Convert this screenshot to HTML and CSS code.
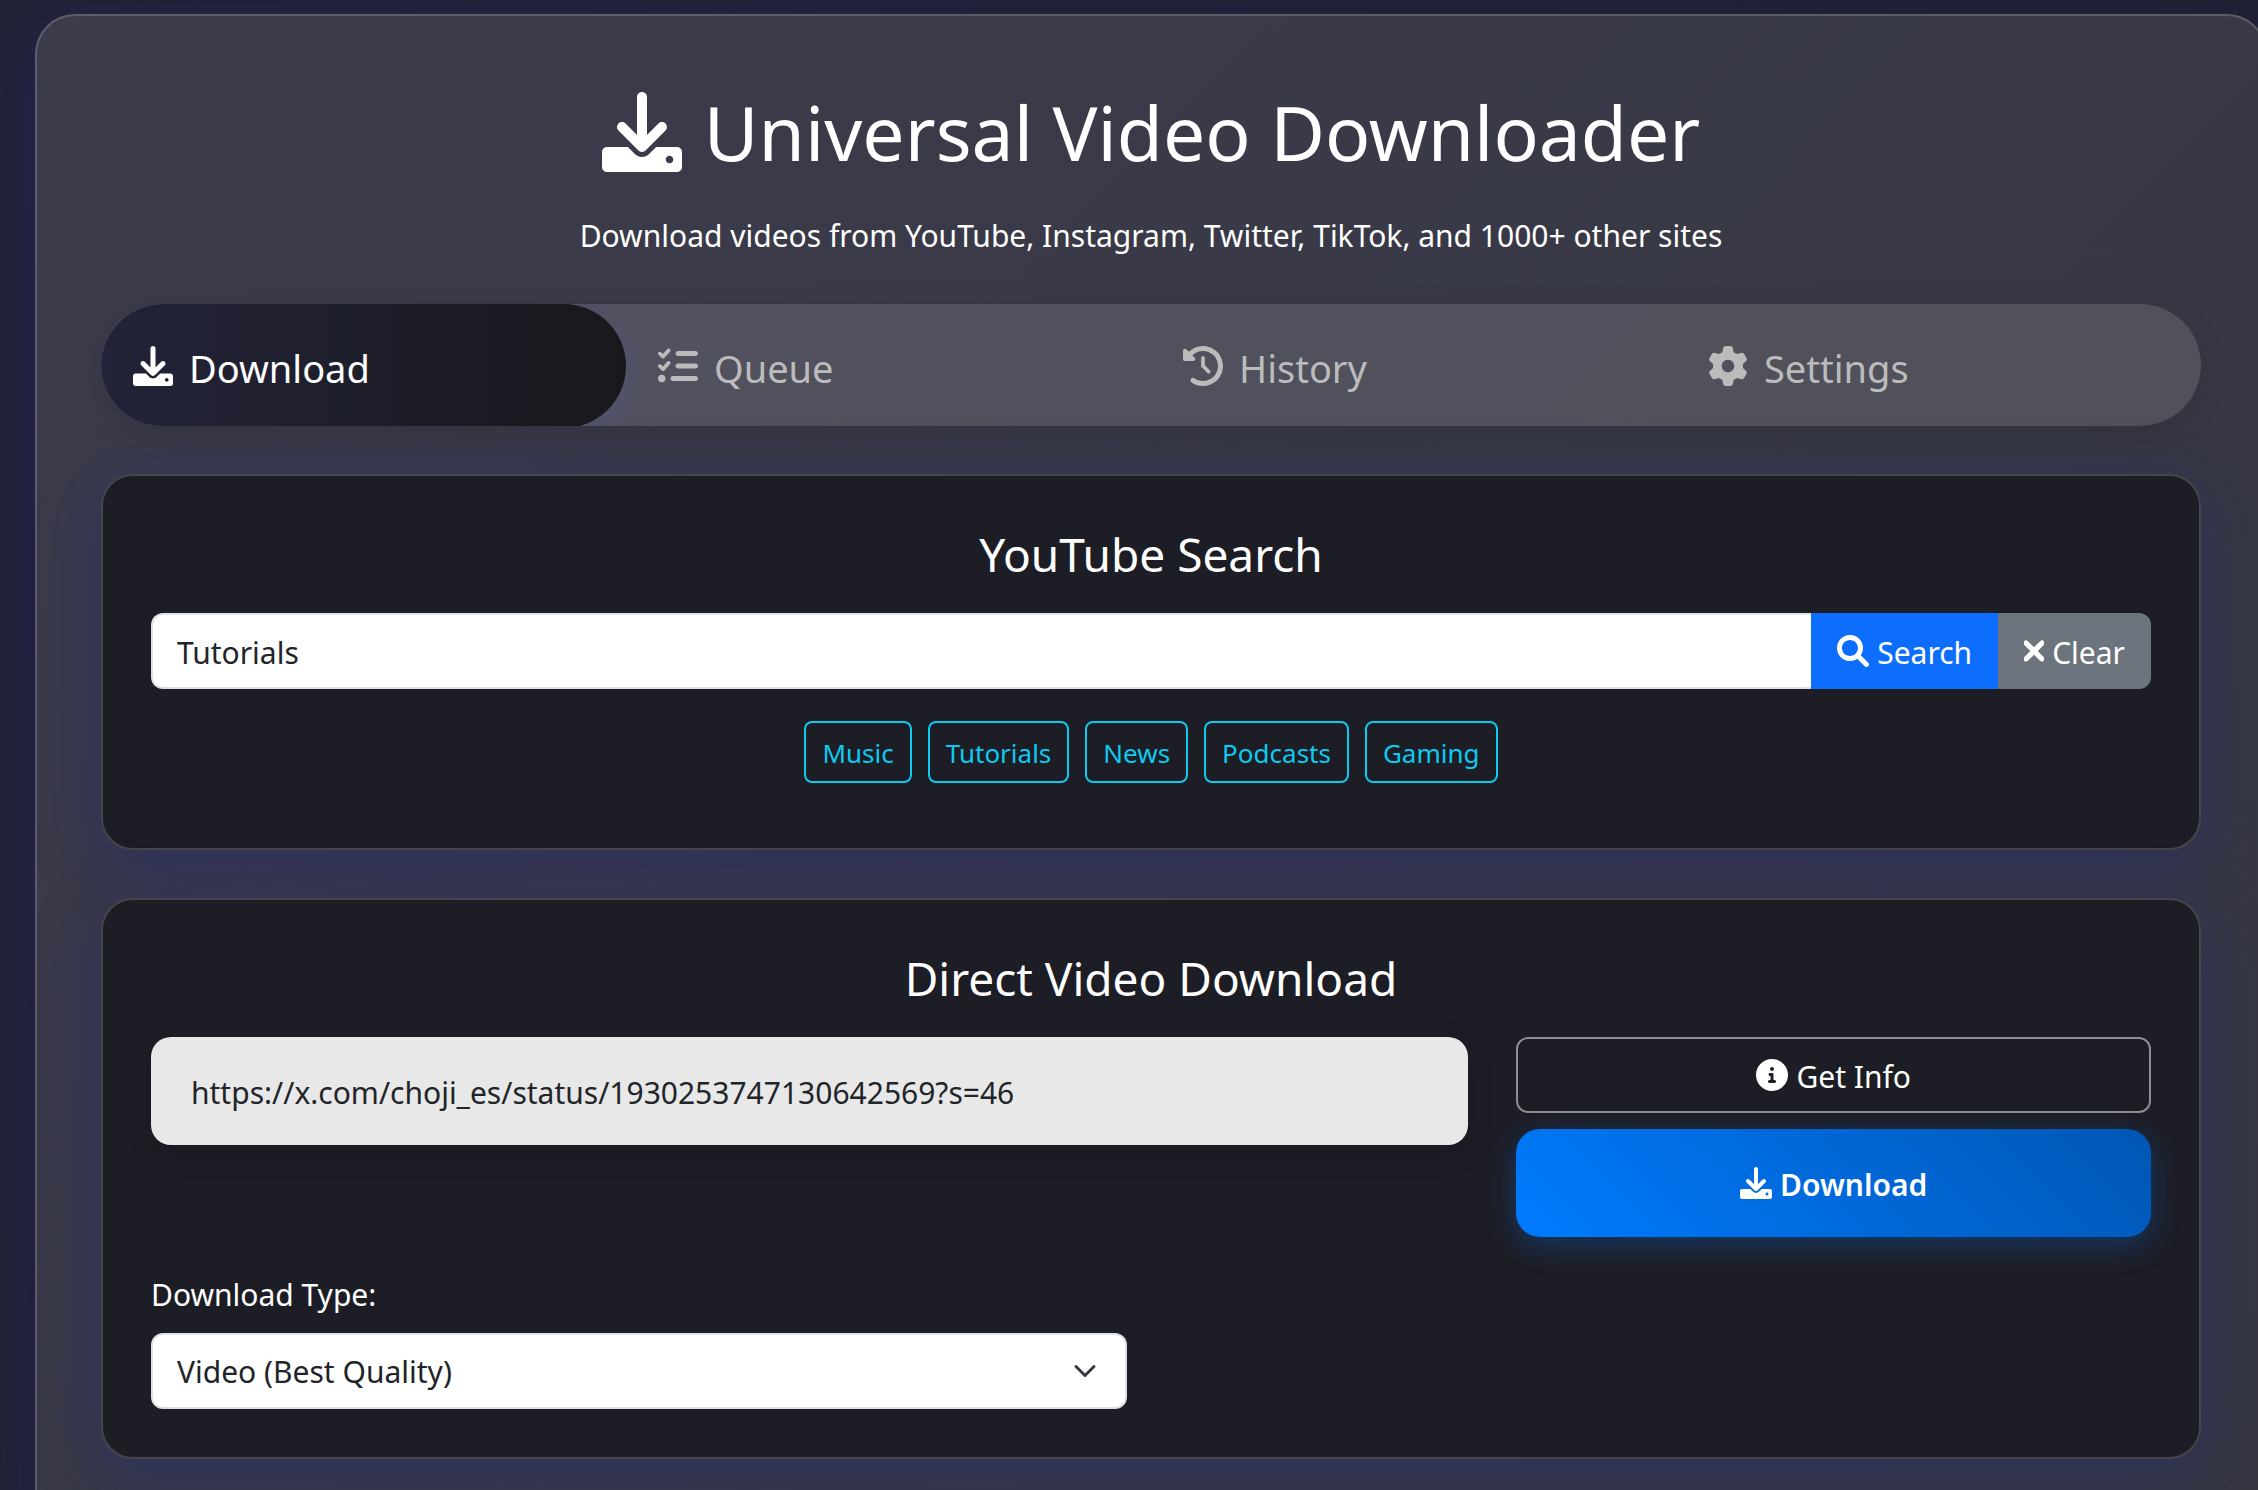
FILE: index.html
```html
<!DOCTYPE html>
<html lang="en">
<head>
<meta charset="utf-8">
<meta name="viewport" content="width=device-width, initial-scale=1">
<title>Universal Video Downloader</title>
<link rel="stylesheet" href="styles.css">
</head>
<body>
<svg class="sprite" aria-hidden="true">
  <symbol id="i-download" viewBox="0 0 512 512"><path d="M480 352h-133.5l-45.25 45.25C289.2 409.3 273.1 416 256 416s-33.16-6.656-45.25-18.75L165.5 352H32c-17.67 0-32 14.33-32 32v96c0 17.67 14.33 32 32 32h448c17.67 0 32-14.33 32-32v-96C512 366.3 497.7 352 480 352zM432 456c-13.2 0-24-10.8-24-24c0-13.2 10.8-24 24-24s24 10.8 24 24C456 445.2 445.2 456 432 456zM233.4 374.6C239.6 380.9 247.8 384 256 384s16.38-3.125 22.62-9.375l128-128c12.49-12.5 12.49-32.75 0-45.25c-12.5-12.5-32.76-12.5-45.25 0L288 274.8V32c0-17.67-14.33-32-32-32C238.3 0 224 14.33 224 32v242.8L150.6 201.4c-12.49-12.5-32.75-12.5-45.25 0c-12.49 12.5-12.49 32.75 0 45.25L233.4 374.6z"/></symbol>
  <symbol id="i-list" viewBox="0 0 512 512"><path d="M152.1 38.16C161.9 47.03 162.7 62.2 153.8 72.06L81.84 152.1C77.43 156.9 71.21 159.8 64.63 159.1C58.05 160.2 51.69 157.6 47.03 152.1L7.029 112.1C-2.343 103.6-2.343 88.4 7.029 79.03C16.4 69.66 31.6 69.66 40.97 79.03L63.08 101.1L118.2 39.94C127 30.09 142.2 29.29 152.1 38.16V38.16zM152.1 198.2C161.9 207 162.7 222.2 153.8 232.1L81.84 312.1C77.43 316.9 71.21 319.8 64.63 319.1C58.05 320.2 51.69 317.6 47.03 312.1L7.029 272.1C-2.343 263.6-2.343 248.4 7.029 239C16.4 229.7 31.6 229.7 40.97 239L63.08 261.1L118.2 199.9C127 190.1 142.2 189.3 152.1 198.2V198.2zM224 96C224 78.33 238.3 64 256 64H480C497.7 64 512 78.33 512 96C512 113.7 497.7 128 480 128H256C238.3 128 224 113.7 224 96V96zM224 256C224 238.3 238.3 224 256 224H480C497.7 224 512 238.3 512 256C512 273.7 497.7 288 480 288H256C238.3 288 224 273.7 224 256zM160 416C160 398.3 174.3 384 192 384H480C497.7 384 512 398.3 512 416C512 433.7 497.7 448 480 448H192C174.3 448 160 433.7 160 416zM0 416C0 389.5 21.49 368 48 368C74.51 368 96 389.5 96 416C96 442.5 74.51 464 48 464C21.49 464 0 442.5 0 416z"/></symbol>
  <symbol id="i-history" viewBox="0 0 512 512"><path d="M256 0C397.4 0 512 114.6 512 256C512 397.4 397.4 512 256 512C201.7 512 151.2 495 109.7 466.1C95.2 455.1 91.64 436 101.8 421.5C111.9 407 131.8 403.5 146.3 413.6C177.4 435.3 215.2 448 256 448C362 448 448 362 448 256C448 149.1 362 64 256 64C202.1 64 155 85.46 120.2 120.2L151 151C166.1 166.1 155.4 192 134.1 192H24C10.75 192 0 181.3 0 168V57.94C0 36.56 25.85 25.85 40.97 40.97L74.98 74.98C121.3 28.69 185.3 0 256 0zM256 128C269.3 128 280 138.7 280 152V246.1L344.1 311C354.3 320.4 354.3 335.6 344.1 344.1C335.6 354.3 320.4 354.3 311 344.1L239 272.1C234.5 268.5 232 262.4 232 256V152C232 138.7 242.7 128 256 128V128z"/></symbol>
  <symbol id="i-gear" viewBox="0 0 512 512"><path d="M495.9 166.6C499.2 175.2 496.4 184.9 489.6 191.2L446.3 230.6C447.4 238.9 448 247.4 448 256C448 264.6 447.4 273.1 446.3 281.4L489.6 320.8C496.4 327.1 499.2 336.8 495.9 345.4C491.5 357.3 486.2 368.8 480.2 379.7L475.5 387.8C468.9 398.8 461.5 409.2 453.4 419.1C447.4 426.2 437.7 428.7 428.9 425.9L373.2 408.1C359.8 418.4 344.1 427 329.2 433.6L316.7 490.7C314.7 499.7 307.7 506.1 298.5 508.5C284.7 510.8 270.5 512 255.1 512C241.5 512 227.3 510.8 213.5 508.5C204.3 506.1 197.3 499.7 195.3 490.7L182.8 433.6C167 427 152.2 418.4 138.8 408.1L83.14 425.9C74.3 428.7 64.55 426.2 58.63 419.1C50.52 409.2 43.12 398.8 36.52 387.8L31.84 379.7C25.77 368.8 20.49 357.3 16.06 345.4C12.82 336.8 15.55 327.1 22.41 320.8L65.67 281.4C64.57 273.1 64 264.6 64 256C64 247.4 64.57 238.9 65.67 230.6L22.41 191.2C15.55 184.9 12.82 175.3 16.06 166.6C20.49 154.7 25.78 143.2 31.84 132.3L36.51 124.2C43.12 113.2 50.52 102.8 58.63 92.95C64.55 85.8 74.3 83.32 83.14 86.14L138.8 103.9C152.2 93.56 167 84.96 182.8 78.43L195.3 21.33C197.3 12.25 204.3 5.04 213.5 3.51C227.3 1.201 241.5 0 256 0C270.5 0 284.7 1.201 298.5 3.51C307.7 5.04 314.7 12.25 316.7 21.33L329.2 78.43C344.1 84.96 359.8 93.56 373.2 103.9L428.9 86.14C437.7 83.32 447.4 85.8 453.4 92.95C461.5 102.8 468.9 113.2 475.5 124.2L480.2 132.3C486.2 143.2 491.5 154.7 495.9 166.6V166.6zM256 336C300.2 336 336 300.2 336 255.1C336 211.8 300.2 175.1 256 175.1C211.8 175.1 176 211.8 176 255.1C176 300.2 211.8 336 256 336z"/></symbol>
  <symbol id="i-search" viewBox="0 0 512 512"><path d="M500.3 443.7l-119.7-119.7c27.22-40.41 40.65-90.9 33.46-144.7C401.8 87.79 326.8 13.32 235.2 1.723C99.01-15.51-15.51 99.01 1.724 235.2c11.6 91.64 86.08 166.7 177.6 178.9c53.8 7.189 104.3-6.236 144.7-33.46l119.7 119.7c15.62 15.62 40.95 15.62 56.57 0C515.9 484.7 515.9 459.3 500.3 443.7zM79.1 208c0-70.58 57.42-128 128-128s128 57.42 128 128c0 70.58-57.42 128-128 128S79.1 278.6 79.1 208z"/></symbol>
  <symbol id="i-xmark" viewBox="0 0 320 512"><path stroke="currentColor" stroke-width="20" d="M310.6 361.4c12.5 12.5 12.5 32.75 0 45.25C304.4 412.9 296.2 416 288 416s-16.38-3.125-22.62-9.375L160 301.3L54.63 406.6C48.38 412.9 40.19 416 32 416S15.63 412.9 9.375 406.6c-12.5-12.5-12.5-32.75 0-45.25l105.4-105.4L9.375 150.6c-12.5-12.5-12.5-32.75 0-45.25s32.75-12.5 45.25 0L160 210.8l105.4-105.4c12.5-12.5 32.75-12.5 45.25 0s12.5 32.75 0 45.25l-105.4 105.4L310.6 361.4z"/></symbol>
  <symbol id="i-info" viewBox="0 0 512 512"><path d="M256 0C114.6 0 0 114.6 0 256s114.6 256 256 256s256-114.6 256-256S397.4 0 256 0zM256 128c17.67 0 32 14.33 32 32c0 17.67-14.33 32-32 32S224 177.7 224 160C224 142.3 238.3 128 256 128zM296 384h-80C202.8 384 192 373.3 192 360s10.75-24 24-24h16v-64H224c-13.25 0-24-10.75-24-24S210.8 224 224 224h32c13.25 0 24 10.75 24 24v88h16c13.25 0 24 10.75 24 24S309.3 384 296 384z"/></symbol>
</svg>

<main class="panel">
  <header class="hero">
    <h1 class="hero-title"><svg class="icon icon-xl" aria-hidden="true"><use href="#i-download"/></svg><span>Universal Video Downloader</span></h1>
    <p class="hero-sub">Download videos from YouTube, Instagram, Twitter, TikTok, and 1000+ other sites</p>
  </header>

  <nav class="tabs" aria-label="Sections">
    <button type="button" class="tab tab-active" aria-current="page"><svg class="icon icon-lg" aria-hidden="true"><use href="#i-download"/></svg><span>Download</span></button>
    <button type="button" class="tab"><svg class="icon icon-lg" aria-hidden="true"><use href="#i-list"/></svg><span>Queue</span></button>
    <button type="button" class="tab"><svg class="icon icon-lg" aria-hidden="true"><use href="#i-history"/></svg><span>History</span></button>
    <button type="button" class="tab"><svg class="icon icon-lg" aria-hidden="true"><use href="#i-gear"/></svg><span>Settings</span></button>
  </nav>

  <section class="card">
    <h2 class="card-title">YouTube Search</h2>
    <form class="search">
      <input class="search-input" type="text" value="Tutorials" aria-label="Search YouTube">
      <button type="button" class="btn btn-primary"><svg class="icon" aria-hidden="true"><use href="#i-search"/></svg><span>Search</span></button>
      <button type="button" class="btn btn-secondary"><svg class="icon icon-narrow" aria-hidden="true"><use href="#i-xmark"/></svg><span>Clear</span></button>
    </form>
    <div class="chips">
      <button type="button" class="chip">Music</button>
      <button type="button" class="chip">Tutorials</button>
      <button type="button" class="chip">News</button>
      <button type="button" class="chip">Podcasts</button>
      <button type="button" class="chip">Gaming</button>
    </div>
  </section>

  <section class="card">
    <h2 class="card-title">Direct Video Download</h2>
    <form class="direct">
      <input class="url-input" type="text" value="https://x.com/choji_es/status/1930253747130642569?s=46" aria-label="Video URL">
      <div class="actions">
        <button type="button" class="btn btn-outline"><svg class="icon" aria-hidden="true"><use href="#i-info"/></svg><span>Get Info</span></button>
        <button type="button" class="btn btn-download"><svg class="icon" aria-hidden="true"><use href="#i-download"/></svg><span>Download</span></button>
      </div>
      <div class="field">
        <label class="field-label" for="type">Download Type:</label>
        <select class="select" id="type">
          <option>Video (Best Quality)</option>
        </select>
      </div>
    </form>
  </section>
</main>
</body>
</html>
```

FILE: styles.css
```css
*, *::before, *::after { box-sizing: border-box; }

body {
  margin: 0;
  min-height: 100vh;
  padding: 14px 0 0 35px;
  overflow: hidden;
  background: linear-gradient(135deg, #232336, #1e1f2a);
  color: #fff;
  font: 30px/48px "Noto Sans", "Open Sans", sans-serif;
}

button, input, select { font: inherit; color: inherit; margin: 0; }
button { cursor: pointer; }

.sprite { position: absolute; width: 0; height: 0; }

.icon { width: 32px; height: 32px; fill: currentColor; flex: none; }
.icon-narrow { width: 20px; overflow: visible; }
.icon-lg { width: 40px; height: 40px; }
.icon-xl { width: 80px; height: 80px; }

.panel {
  margin-right: -9px;
  padding: 64px 64px 80px;
  border: 2px solid rgba(255, 255, 255, .18);
  border-radius: 40px;
  background: rgba(255, 255, 255, .11);
  box-shadow: 0 16px 64px rgba(31, 38, 135, .37);
}

.hero { padding-top: 4px; text-align: center; margin-bottom: 44px; }
.hero-title {
  display: flex;
  justify-content: center;
  align-items: center;
  gap: 22px;
  margin: 0 0 32px;
  font-size: 75px;
  line-height: 96px;
  font-weight: 400;
}
.hero-sub { margin: 0; }

.tabs {
  display: grid;
  grid-template-columns: repeat(4, 1fr);
  margin-bottom: 48px;
  border-radius: 61px;
  overflow: hidden;
  background: rgba(255, 255, 255, .12);
  box-shadow: 0 8px 30px rgba(0, 0, 0, .1);
}
.tab {
  display: flex;
  align-items: center;
  gap: 16px;
  margin-bottom: -2px;
  padding: 32px;
  border: 0;
  border-radius: 62px;
  background: none;
  color: #bbb;
  font-size: 38px;
  line-height: 60px;
}
.tab span { padding-top: 4px; line-height: 56px; }
.tab-active {
  background: linear-gradient(90deg, #232339, #18191c);
  box-shadow: 0 8px 30px rgba(90, 95, 170, .3);
  color: #fff;
}
.tab { min-height: 124px; }

.card {
  margin-bottom: 48px;
  padding: 48px;
  border: 2px solid #45454a;
  border-radius: 32px;
  background: #1d1d25;
  box-shadow: 0 16px 64px rgba(31, 38, 135, .37);
}
.card-title {
  margin: 0 0 31px;
  padding-top: 2px;
  font-size: 46px;
  line-height: 56px;
  font-weight: 400;
  text-align: center;
}

.btn {
  display: flex;
  align-items: center;
  justify-content: center;
  gap: 8px;
  padding: 12px 24px;
  border: 2px solid transparent;
  border-radius: 12px;
}
.btn span { padding-top: 4px; line-height: 44px; }
.btn-primary { border-color: #0d6efd; border-radius: 0; background: #0d6efd; }
.btn-secondary { border-color: #6c757d; border-radius: 0 12px 12px 0; background: #6c757d; }
.btn-outline { border-color: #8e8e92; background: none; }
.btn-download {
  padding: 28px 24px;
  border-radius: 24px;
  border-color: transparent;
  background: linear-gradient(45deg, #007bff, #0056b3) border-box;
  box-shadow: 0 8px 30px rgba(0, 123, 255, .3);
  font-weight: 600;
}

.search { display: flex; }
.search-input {
  flex: 1;
  min-width: 0;
  height: 76px;
  padding: 2px 24px 0;
  border: 2px solid #dee2e6;
  border-right: 0;
  border-radius: 12px 0 0 12px;
  background: #fff;
  color: #212529;
}

.chips {
  display: flex;
  flex-wrap: wrap;
  justify-content: center;
  gap: 16px;
  margin: 32px 0 17px;
}
.chip {
  padding: 10px 16px 8px;
  border: 2px solid #0dcaf0;
  border-radius: 8px;
  background: none;
  color: #0dcaf0;
  font-size: 26px;
  line-height: 40px;
}

.direct {
  display: grid;
  grid-template-columns: repeat(6, 1fr);
  align-items: start;
  gap: 32px 48px;
}
.url-input {
  grid-column: span 4;
  width: 100%;
  height: 108px;
  padding: 2px 40px 0;
  border: 0;
  border-radius: 20px;
  background: #e8e8e8;
  box-shadow: 0 8px 30px rgba(0, 0, 0, .1);
  color: #212529;
}
.actions { grid-column: span 2; display: grid; gap: 16px; }
.field { grid-column: span 3; display: grid; gap: 16px; }
.field-label { padding-top: 4px; line-height: 44px; }
.select {
  width: 100%;
  height: 76px;
  padding: 2px 72px 0 24px;
  border: 2px solid #dee2e6;
  border-radius: 12px;
  appearance: none;
  background: #fff url("data:image/svg+xml,%3csvg xmlns='http://www.w3.org/2000/svg' viewBox='0 0 16 16'%3e%3cpath fill='none' stroke='%23343a40' stroke-linecap='round' stroke-linejoin='round' stroke-width='2' d='m2 5 6 6 6-6'/%3e%3c/svg%3e") no-repeat right 24px center / 32px 24px;
  color: #212529;
}
```
